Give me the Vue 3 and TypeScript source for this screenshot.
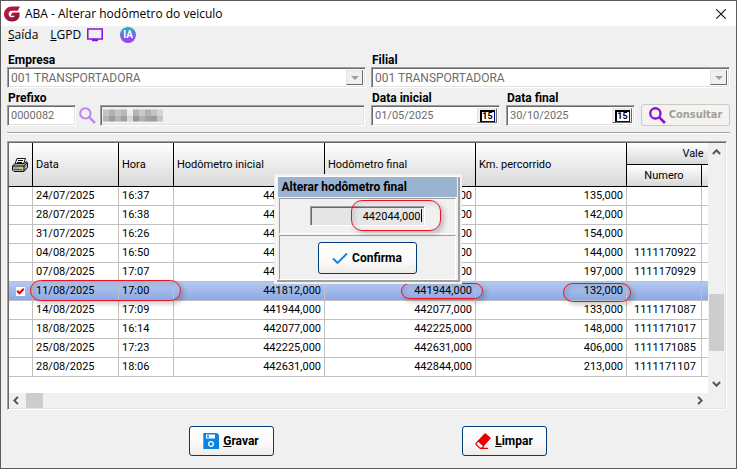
<script setup lang="ts">
import { ref } from 'vue'

interface Trip {
  date: string
  time: string
  start: string
  end: string
  km: string
  voucher: string
  selected?: boolean
}

const trips: Trip[] = [
  { date: '24/07/2025', time: '16:37', start: '441040,000', end: '441175,000', km: '135,000', voucher: '' },
  { date: '28/07/2025', time: '16:38', start: '441175,000', end: '441317,000', km: '142,000', voucher: '' },
  { date: '31/07/2025', time: '16:26', start: '441317,000', end: '441471,000', km: '154,000', voucher: '' },
  { date: '04/08/2025', time: '16:50', start: '441471,000', end: '441615,000', km: '144,000', voucher: '1111170922' },
  { date: '07/08/2025', time: '17:07', start: '441615,000', end: '441812,000', km: '197,000', voucher: '1111170929' },
  { date: '11/08/2025', time: '17:00', start: '441812,000', end: '441944,000', km: '132,000', voucher: '', selected: true },
  { date: '14/08/2025', time: '17:09', start: '441944,000', end: '442077,000', km: '133,000', voucher: '1111171087' },
  { date: '18/08/2025', time: '16:14', start: '442077,000', end: '442225,000', km: '148,000', voucher: '1111171017' },
  { date: '25/08/2025', time: '17:23', start: '442225,000', end: '442631,000', km: '406,000', voucher: '1111171085' },
  { date: '28/08/2025', time: '18:06', start: '442631,000', end: '442844,000', km: '213,000', voucher: '1111171107' },
]

const prefix = ref('0000082')
const dateFrom = ref('01/05/2025')
const dateTo = ref('30/10/2025')
const newOdometer = ref('442044,000')

// Grey levels of the masked vehicle description, one row of tiles per entry
const mask: string[][] = [
  ['#c2c2c2', '#b0b0b0', '#c4c4c4', '#b8b8b8', '#efefef', '#b4b4b4', '#c8c8c8', '#b0b0b0', '#c4c4c4', '#d4d4d4'],
  ['#b4b4b4', '#9c9c9c', '#b4b4b4', '#a0a0a0', '#d8d8d8', '#989898', '#b0b0b0', '#a0a0a0', '#9c9c9c', '#c4c4c4'],
]
</script>

<template>
  <div class="window">
    <header class="titlebar">
      <svg class="logo" viewBox="0 0 16 16" aria-hidden="true">
        <defs>
          <linearGradient id="logo-fill" x1="0" y1="0" x2="1" y2="1">
            <stop offset="0" stop-color="#d01848" />
            <stop offset="1" stop-color="#7c1430" />
          </linearGradient>
        </defs>
        <path d="M16 0.500H8C3.300 0.500 0 3.700 0 8s3.300 7.500 8 7.500c4 0 7-2.200 7.500-5.500V6.500H8.500L6.500 9.800h4.300c-.6 1.100-1.600 1.500-3 1.500-1.900 0-3.200-1.300-3.200-3.300S5.900 4.700 7.800 4.700H13.700z" fill="url(#logo-fill)" />
      </svg>
      <h1>ABA - Alterar hodômetro do veiculo</h1>
      <button type="button" class="close" aria-label="Fechar">
        <svg viewBox="0 0 10 10"><path d="M0.300 0.300 9.700 9.700M9.700 0.300 0.300 9.700" fill="none" stroke="#111" stroke-width="1.1" /></svg>
      </button>
    </header>

    <nav class="menu">
      <a href="#"><u>S</u>aída</a>
      <a href="#"><u>L</u>GPD</a>
      <a href="#" class="monitor" aria-label="Monitor">
        <svg viewBox="0 0 16 14"><path d="M0.750 1h14.500v10H0.750zM5 12.500h6" fill="none" stroke="#8a12e6" stroke-width="1.6" /></svg>
      </a>
      <a href="#" class="ia" aria-label="IA"><span>IA</span></a>
    </nav>

    <main>
      <form class="filters" @submit.prevent>
        <div class="field">
          <label for="company">Empresa</label>
          <div class="combo sunken">
            <select id="company" disabled><option>001 TRANSPORTADORA</option></select>
            <span class="arrow"></span>
          </div>
        </div>
        <div class="field">
          <label for="branch">Filial</label>
          <div class="combo sunken">
            <select id="branch" disabled><option>001 TRANSPORTADORA</option></select>
            <span class="arrow"></span>
          </div>
        </div>

        <div class="line">
          <div class="field prefix">
            <label for="prefix">Prefixo</label>
            <input id="prefix" v-model="prefix" class="sunken" type="text" />
          </div>
          <button type="button" class="lookup" aria-label="Procurar">
            <svg viewBox="0 0 16 16"><circle cx="6" cy="6" r="4.900" fill="none" stroke="#c084ee" stroke-width="1.900" /><path d="M9.500 9.500 15 15" stroke="#c084ee" stroke-width="2.300" /></svg>
          </button>
          <div class="masked sunken">
            <svg viewBox="0 0 60 12" aria-hidden="true">
              <template v-for="(row, y) in mask" :key="y">
                <rect v-for="(fill, x) in row" :key="x" :x="x * 6" :y="y * 6" width="6" height="6" :fill="fill" />
              </template>
            </svg>
          </div>
        </div>

        <div class="line">
          <div class="field">
            <label for="from">Data inicial</label>
            <div class="date sunken">
              <input id="from" v-model="dateFrom" type="text" />
              <button type="button" aria-label="Calendário"><span>15</span></button>
            </div>
          </div>
          <div class="field">
            <label for="to">Data final</label>
            <div class="date sunken">
              <input id="to" v-model="dateTo" type="text" />
              <button type="button" aria-label="Calendário"><span>15</span></button>
            </div>
          </div>
          <button type="submit" class="consult" disabled>
            <svg viewBox="0 0 16 16" aria-hidden="true"><circle cx="6" cy="6" r="4.800" fill="none" stroke="#8a12d8" stroke-width="2.200" /><path d="M9.500 9.500 15 15" stroke="#8a12d8" stroke-width="2.500" /></svg>
            Consultar
          </button>
        </div>
      </form>

      <hr />

      <section class="grid sunken">
        <div class="view">
          <table>
            <colgroup>
              <col class="c-mark" /><col class="c-date" /><col class="c-time" />
              <col class="c-num" /><col class="c-num" /><col class="c-num" />
              <col class="c-voucher" /><col class="c-rest" />
            </colgroup>
            <thead>
              <tr>
                <th rowspan="2" class="print">
                  <svg viewBox="0 0 16 14" aria-label="Imprimir">
                    <path d="M5 0.500h8.500L11.500 6H3z" fill="#fff" stroke="#111" />
                    <path d="M6 2.500h5M5.200 4.500h5" stroke="#111" />
                    <path d="M0.500 8 3 5.500h9L14.500 3.500 15.500 5v4.500L12 13.500H2L0.500 12z" fill="#a8a8a8" stroke="#111" />
                    <path d="M1 8h11l3-3M12 8v5" fill="none" stroke="#111" />
                    <path d="M2 11.500h8" stroke="#555" /><path d="M7 10h4" stroke="#f4e400" stroke-width="1.500" />
                  </svg>
                </th>
                <th rowspan="2">Data</th>
                <th rowspan="2">Hora</th>
                <th rowspan="2">Hodômetro inicial</th>
                <th rowspan="2">Hodômetro final</th>
                <th rowspan="2">Km. percorrido</th>
                <th colspan="2" class="center">Vale</th>
              </tr>
              <tr>
                <th class="center">Numero</th>
                <th></th>
              </tr>
            </thead>
            <tbody>
              <tr v-for="trip in trips" :key="trip.date" :class="{ selected: trip.selected }">
                <td class="mark">
                  <svg v-if="trip.selected" viewBox="0 0 9 9" aria-label="Selecionado"><rect width="9" height="9" fill="#fff" /><path d="M1.200 3.800 3.500 6.200 7.800 1.800" fill="none" stroke="#f00000" stroke-width="2.200" /></svg>
                </td>
                <td>{{ trip.date }}<i v-if="trip.selected" class="ring ring-when"></i></td>
                <td>{{ trip.time }}</td>
                <td class="num">{{ trip.start }}</td>
                <td class="num">{{ trip.end }}<i v-if="trip.selected" class="ring ring-end"></i></td>
                <td class="num">{{ trip.km }}<i v-if="trip.selected" class="ring ring-km"></i></td>
                <td class="voucher">{{ trip.voucher }}</td>
                <td></td>
              </tr>
            </tbody>
          </table>
        </div>
        <div class="vbar">
          <svg viewBox="0 0 8 5"><path d="M0.800 4.200 4 1 7.200 4.200" /></svg>
          <span class="thumb"></span>
          <svg viewBox="0 0 8 5"><path d="M0.800 0.800 4 4 7.200 0.800" /></svg>
        </div>
        <div class="hbar">
          <svg viewBox="0 0 5 8"><path d="M4.200 0.800 1 4 4.200 7.200" /></svg>
          <span class="thumb"></span>
          <svg viewBox="0 0 5 8"><path d="M0.800 0.800 4 4 0.800 7.200" /></svg>
        </div>
      </section>
    </main>

    <footer>
      <button type="button" class="action">
        <svg viewBox="0 0 16 16" aria-hidden="true"><path d="M0 0h14l2 2v14H0z" fill="#0a84e4" /><path d="M0 0h1v16H0z" fill="#4aa9f2" /><path d="M3 1.500h9v4H3z" fill="#fff" /><path d="M4 2.500h2v2H4z" fill="#0a84e4" /><circle cx="8" cy="11" r="2.300" fill="none" stroke="#fff" stroke-width="1.300" /></svg>
        <span><u>G</u>ravar</span>
      </button>
      <button type="button" class="action">
        <svg viewBox="0 0 16 16" aria-hidden="true"><path d="M10 0.500 15.500 5 8.500 13 3 8z" fill="#e60000" stroke="#e60000" stroke-linejoin="round" /><path d="M3.200 7.800 0.700 10.800 4.500 15H7l2-2.200M5 15.400h8" fill="none" stroke="#e60000" stroke-width="1.200" /></svg>
        <span><u>L</u>impar</span>
      </button>
    </footer>

    <section class="dialog" role="dialog" aria-labelledby="dialog-title">
      <h2 id="dialog-title">Alterar hodômetro final</h2>
      <div class="panel entry">
        <input v-model="newOdometer" class="sunken" type="text" aria-labelledby="dialog-title" />
        <i class="caret"></i>
        <i class="ring ring-new"></i>
      </div>
      <div class="panel confirm">
        <button type="button" class="action">
          <svg viewBox="0 0 16 16" aria-hidden="true"><path d="M1 8.500 5.500 13 15 3.500" fill="none" stroke="#1080e0" stroke-width="1.900" /></svg>
          <span>Confirma</span>
        </button>
      </div>
    </section>
  </div>
</template>

<style>
body {
  margin: 0;
  background: #f0f0f0;
}
</style>

<style scoped>
* {
  box-sizing: border-box;
}

.window {
  position: relative;
  display: flex;
  flex-direction: column;
  min-height: 100vh;
  border: 1px solid #5c5c5c;
  background: #f0f0f0;
  color: #000;
  font: 12px/14px Roboto, "Liberation Sans", sans-serif;
}

button,
input,
select {
  margin: 0;
  padding: 0;
  border: 0;
  background: none;
  color: inherit;
  font: inherit;
}

svg {
  display: block;
  flex: none;
}

.titlebar {
  display: flex;
  align-items: center;
  gap: 5px;
  height: 25px;
  padding: 0 10px 0 3px;
  background: #fff;
}

.logo {
  width: 16px;
  height: 16px;
}

h1 {
  flex: 1;
  margin: 0;
  font: 12px/16px "Open Sans", "Noto Sans", sans-serif;
}

.close svg {
  width: 10px;
  height: 10px;
}

.menu {
  display: flex;
  align-items: center;
  height: 18px;
  padding: 0 7px;
  gap: 12px;
  font: 12px/16px "Open Sans", "Noto Sans", sans-serif;
}

.menu a {
  color: inherit;
  text-decoration: none;
}

.monitor {
  margin-left: -6px;
}

.monitor svg {
  width: 16px;
  height: 14px;
}

.menu .ia {
  width: 16px;
  height: 16px;
  margin-left: 5px;
  border-radius: 50%;
  background: linear-gradient(#18b8c8, #6f6ae0 50%, #a03cf4);
  font: bold 10px/16px Roboto, sans-serif;
  text-align: center;
}

.ia span {
  color: #fff;
}

main {
  padding: 9px 6px 0;
}

.filters {
  display: grid;
  grid-template-columns: 1fr 1fr;
  gap: 3px 5px;
}

.field {
  display: flex;
  flex-direction: column;
}

label {
  padding: 1px 0 0 1px;
  line-height: 13px;
  font-weight: bold;
}

.sunken {
  border: 1px solid;
  border-color: #a0a0a0 #fff #fff #a0a0a0;
  box-shadow: inset 1px 1px #696969, inset -1px -1px #e3e3e3;
  background: #fff;
}

.field .sunken {
  height: 21px;
  color: #6d6d6d;
}

.combo {
  display: flex;
  padding: 2px 2px 2px 1px;
}

.combo select {
  flex: 1;
  min-width: 0;
  padding-left: 2px;
  appearance: none;
  opacity: 1;
}

.arrow,
.date button {
  display: grid;
  place-items: center;
  width: 17px;
  border: 1px solid;
  border-color: #e3e3e3 #696969 #696969 #e3e3e3;
  background: #f0f0f0;
}

.arrow::after {
  content: "";
  border: 4px solid transparent;
  border-top-color: #a0a0a0;
  border-bottom: 0;
}

.line {
  display: flex;
  align-items: flex-end;
}

.prefix input {
  width: 69px;
  padding: 0 3px;
  font-size: 11px;
}

.lookup {
  margin: 0 4px 2px 3px;
}

.lookup svg {
  width: 17px;
  height: 17px;
}

.masked {
  flex: 1;
  height: 21px;
  margin-right: 1px;
  padding: 3px 2px;
  background: #f0f0f0;
}

.masked svg {
  width: 60px;
  height: 13px;
}

.date {
  display: flex;
  width: 129px;
  margin-right: 6px;
  padding: 2px;
}

.date input {
  flex: 1;
  min-width: 0;
  padding-left: 1px;
  font-size: 11px;
}

.date button {
  width: 20px;
}

.date button span {
  width: 15px;
  height: 12px;
  border: 1px solid #000080;
  border-width: 2px 1px 1px 2px;
  border-top-color: #000;
  border-left-color: #000;
  background: #fff;
  color: #000;
  font: bold 9px/9px Roboto, sans-serif;
}

.consult {
  display: flex;
  flex: 1;
  align-items: center;
  justify-content: center;
  gap: 3px;
  height: 22px;
  border: 1px solid #cdc8c0;
  border-radius: 3px;
  background: #f5f3ef;
  color: #a0a0a0;
  font: bold 11px/14px "DejaVu Sans Condensed", "DejaVu Sans", sans-serif;
}

.consult svg {
  width: 17px;
  height: 17px;
}

hr {
  height: 2px;
  margin: 6px 0 7px;
  border: 0;
  border-top: 1px solid #a0a0a0;
  border-bottom: 1px solid #fff;
}

.grid {
  display: grid;
  grid-template-columns: 1fr 17px;
  grid-template-rows: auto 15px;
  margin-right: 3px;
  padding: 1px;
  background: #f0f0f0;
}

.view {
  height: 250px;
  overflow: hidden;
  background: #fff;
}

table {
  width: 751px;
  border-spacing: 0;
  table-layout: fixed;
  font-size: 11px;
}

.c-mark { width: 24px; }
.c-date { width: 86px; }
.c-time { width: 55px; }
.c-num { width: 151px; }
.c-voucher { width: 75px; }

th {
  height: 22px;
  padding: 0 3px;
  border-right: 1px solid #000;
  border-bottom: 1px solid #000;
  background: linear-gradient(#fff, #d8d8d8);
  font-weight: normal;
  text-align: left;
}

.center {
  text-align: center;
}

.print svg {
  width: 16px;
  height: 14px;
}

td {
  position: relative;
  height: 19px;
  padding: 0 3px;
  border-right: 1px solid #c0c0c0;
  border-bottom: 1px solid #c0c0c0;
  line-height: 18px;
  white-space: nowrap;
}

.mark svg {
  width: 9px;
  height: 9px;
  margin-left: 4px;
}

.num {
  text-align: right;
}

.voucher {
  padding-left: 7px;
}

.selected td {
  background: linear-gradient(#b5c8ee, #8ca9e6);
}

.ring {
  position: absolute;
  z-index: 1;
  border: 1px solid #ee1020;
  border-radius: 11px;
  box-shadow: 3px 3px 5px rgba(0, 0, 0, 0.2), inset 3px 3px 5px rgba(0, 0, 0, 0.1);
  pointer-events: none;
}

.ring-when {
  top: -2px;
  left: -3px;
  width: 151px;
  height: 21px;
}

.ring-end {
  top: 1px;
  right: -8px;
  width: 82px;
  height: 16px;
}

.ring-km {
  top: 1px;
  right: -5px;
  width: 68px;
  height: 19px;
}

.vbar,
.hbar {
  display: flex;
  align-items: center;
  justify-content: space-between;
}

.vbar {
  flex-direction: column;
  padding: 6px 0;
}

.hbar {
  padding: 0 5px 0 4px;
  gap: 7px;
}

.vbar svg {
  width: 9px;
  height: 6px;
}

.hbar svg {
  width: 6px;
  height: 9px;
}

.vbar path,
.hbar path {
  fill: none;
  stroke: #555;
  stroke-width: 1.8px;
}

.thumb {
  background: #cdcdcd;
}

.vbar .thumb {
  width: 15px;
  height: 57px;
  margin-top: auto;
  margin-bottom: 30px;
}

.hbar .thumb {
  width: 17px;
  height: 15px;
  margin-right: auto;
}

footer {
  display: flex;
  justify-content: center;
  gap: 188px;
  padding: 16px 2px 11px 0;
}

.action {
  display: flex;
  align-items: center;
  justify-content: center;
  gap: 4px;
  width: 85px;
  height: 30px;
  border: 1px solid #003c74;
  border-radius: 3px;
  background: linear-gradient(#fff, #fafafa 60%, #efebe7);
  font: bold 12px/14px Roboto, sans-serif;
}

.action svg {
  width: 16px;
  height: 16px;
}

.dialog {
  position: absolute;
  z-index: 2;
  top: 173px;
  left: 0;
  right: 2px;
  width: 188px;
  margin: 0 auto;
  padding: 1px 3px 2px 2px;
  border: 2px solid #f0f0f0;
  background: #f0f0f0;
  box-shadow: inset 1px 1px #fff, inset -2px -2px #a0a0a0;
}

h2 {
  margin: 0;
  padding: 3px 4px;
  background: #9ab3d1;
  font: bold 12px/14px Roboto, sans-serif;
}

.panel {
  position: relative;
  display: flex;
  justify-content: center;
  border: 1px solid;
  border-color: #a0a0a0 #fff #fff #a0a0a0;
}

.entry {
  height: 36px;
  margin: 1px;
  padding-top: 7px;
}

.entry input {
  width: 115px;
  height: 20px;
  padding: 0 3px;
  background: #e6e6e6;
  font-size: 11px;
  text-align: right;
}

.caret {
  position: absolute;
  top: 10px;
  right: 33px;
  width: 1px;
  height: 13px;
  background: #000;
}

.ring-new {
  top: 1px;
  right: 14px;
  width: 90px;
  height: 31px;
}

.confirm {
  height: 45px;
  margin: 0 1px;
  padding-top: 6px;
}

.confirm .action {
  width: 99px;
  height: 32px;
}
</style>
